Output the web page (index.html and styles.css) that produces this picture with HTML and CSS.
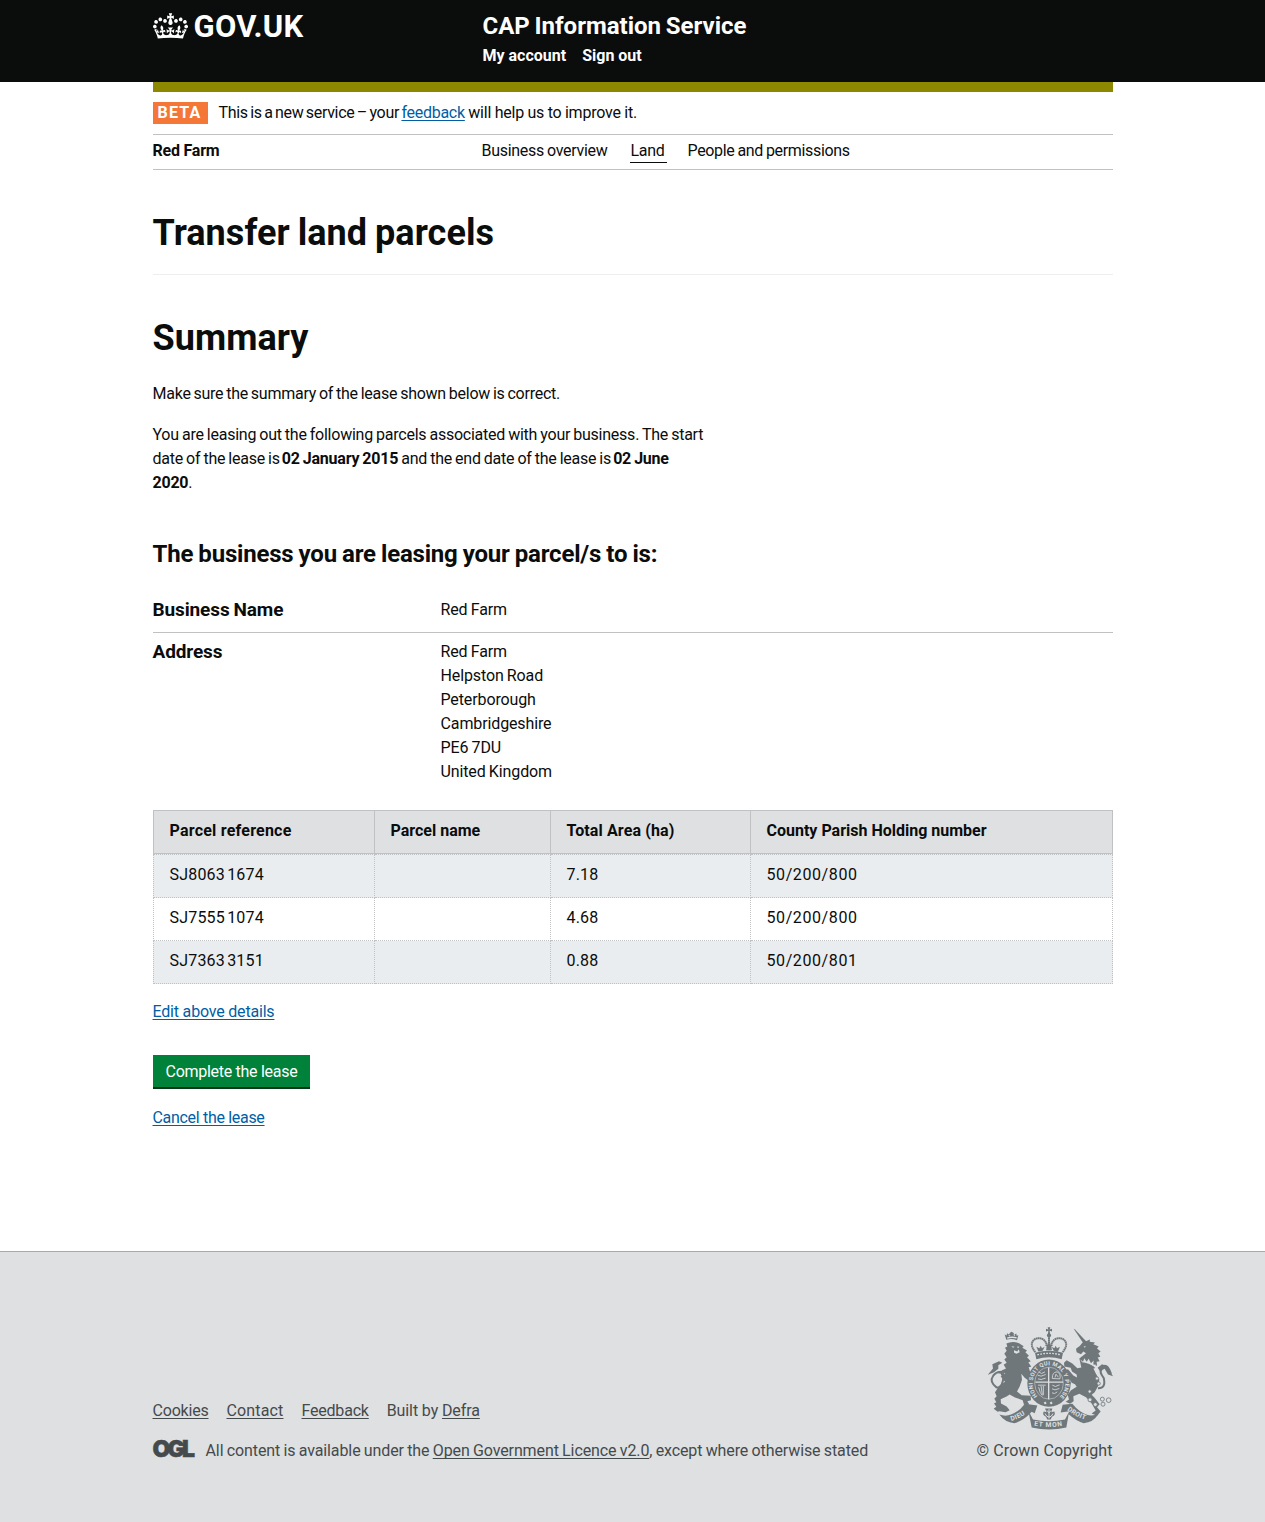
FILE: index.html
```html
<!DOCTYPE html>
<html lang="en">
<head>
<meta charset="utf-8">
<title>Transfer land parcels</title>
<link rel="stylesheet" href="styles.css">
</head>
<body>
<header class="masthead">
  <div class="wrap masthead-row">
    <a class="logo" href="#">
      <svg class="crown" viewBox="0 0 132 97" fill="#fff" aria-hidden="true"><path d="M25 30.2c3.5 1.5 7.7-.2 9.1-3.7 1.5-3.6-.2-7.8-3.9-9.2-3.6-1.4-7.6.3-9.1 3.9-1.4 3.5.3 7.5 3.9 9zM9 39.5c3.6 1.5 7.8-.2 9.2-3.7 1.5-3.6-.2-7.8-3.9-9.1-3.6-1.5-7.6.2-9.1 3.8-1.4 3.5.3 7.5 3.8 9zM4.4 57.2c3.5 1.5 7.7-.2 9.1-3.8 1.5-3.6-.2-7.7-3.9-9.1-3.5-1.5-7.6.3-9.1 3.8-1.4 3.5.3 7.6 3.9 9.1zm38.3-21.4c3.5 1.5 7.7-.2 9.1-3.8 1.5-3.6-.2-7.7-3.9-9.1-3.6-1.5-7.6.3-9.1 3.8-1.3 3.6.4 7.7 3.9 9.1zm64.4-5.6c-3.6 1.5-7.8-.2-9.1-3.7-1.5-3.6.2-7.8 3.8-9.2 3.6-1.4 7.7.3 9.2 3.9 1.3 3.5-.4 7.5-3.9 9zm15.9 9.3c-3.6 1.5-7.7-.2-9.1-3.7-1.5-3.6.2-7.8 3.7-9.1 3.6-1.5 7.7.2 9.2 3.8 1.5 3.5-.3 7.5-3.8 9zm4.7 17.7c-3.6 1.5-7.8-.2-9.2-3.8-1.5-3.6.2-7.7 3.9-9.1 3.6-1.5 7.7.3 9.2 3.8 1.3 3.5-.4 7.6-3.9 9.1zM89.3 35.8c-3.6 1.5-7.8-.2-9.2-3.8-1.4-3.6.2-7.7 3.9-9.1 3.6-1.5 7.7.3 9.2 3.8 1.4 3.6-.3 7.7-3.9 9.1zM69.7 17.7l8.9 4.7V9.3l-8.9 2.8c-.2-.3-.5-.6-.9-.9L72.4 0H59.6l3.5 11.2c-.3.3-.6.5-.9.9l-8.8-2.8v13.1l8.8-4.7c.3.3.6.7.9.9l-5 15.4v.1c-.2.8-.4 1.6-.4 2.4 0 4.1 3.1 7.5 7 8.1h.2c.3 0 .7.1 1 .1.4 0 .7 0 1-.1h.2c4-.6 7.1-4.1 7.1-8.1 0-.8-.1-1.7-.4-2.4V34l-5.1-15.4c.4-.2.7-.6 1-.9zM66 92.8c16.9 0 32.8 1.1 47.1 3.2 4-16.9 8.9-26.7 14-33.5l-9.6-3.4c1 4.9 1.1 7.2 0 10.2-1.5-1.4-3-4.3-4.2-8.7L108.6 76c2.8-2 5-3.2 7.5-3.3-4.4 9.4-10 11.9-13.6 11.2-4.3-.8-6.3-4.6-5.6-7.9 1-4.7 5.7-5.9 8-.5 4.3-8.7-3-11.4-7.6-8.8 7.1-7.2 7.9-13.5 2.1-21.1-8 6.1-8.1 12.3-4.5 20.8-4.7-5.4-12.1-2.5-9.5 6.2 3.4-5.2 7.9-2 7.2 3.1-.6 4.3-6.4 7.8-13.5 7.2-10.3-.9-10.9-8-11.2-13.8 2.5-.5 7.1 1.8 11 7.3L80.2 60c-4.1 4.4-8 5.3-12.3 5.4 1.4-4.4 8-11.6 8-11.6H55.5s6.4 7.2 7.9 11.6c-4.2-.1-8-1-12.3-5.4l1.4 16.4c3.9-5.5 8.5-7.7 10.9-7.3-.3 5.8-.9 12.8-11.1 13.8-7.2.6-12.9-2.9-13.5-7.2-.7-5 3.8-8.3 7.1-3.1 2.7-8.7-4.6-11.6-9.4-6.2 3.7-8.5 3.6-14.7-4.6-20.8-5.8 7.6-5 13.9 2.2 21.1-4.7-2.6-11.9.1-7.7 8.8 2.3-5.5 7.1-4.2 8.1.5.7 3.3-1.3 7.1-5.7 7.9-3.5.7-9-1.8-13.5-11.2 2.5.1 4.7 1.3 7.5 3.3l-4.7-15.4c-1.2 4.4-2.7 7.2-4.3 8.7-1.1-3-.9-5.3 0-10.2l-9.5 3.4c5 6.9 9.9 16.7 14 33.5 14.8-2.1 30.8-3.2 47.7-3.2z"/></svg>
      <span class="logo-text">GOV.UK</span>
    </a>
    <div class="service">
      <a class="service-name" href="#">CAP Information Service</a>
      <nav class="service-links"><a href="#">My account</a><a href="#">Sign out</a></nav>
    </div>
  </div>
</header>

<div class="wrap">
  <div class="phase">
    <strong class="tag">BETA</strong>
    <p class="phase-text"><span class="phase-lead">This is a new service – your </span><a href="#">feedback</a><span class="phase-tail"> will help us to improve it.</span></p>
  </div>
  <div class="business-bar">
    <strong class="business-name">Red Farm</strong>
    <nav class="tabs"><a href="#">Business overview</a><a class="current" href="#">Land</a><a class="tab-people" href="#">People and permissions</a></nav>
  </div>

  <main>
    <h1 class="title">Transfer land parcels</h1>
    <h2 class="section">Summary</h2>
    <div class="prose">
      <p class="intro">Make sure the summary of the lease shown below is correct.</p>
      <p class="lease">You are leasing out the following parcels associated with your business. The start<br>date of the lease is <b>02 January 2015</b> and the end date of the lease is <b>02 June</b><br><b class="year">2020</b>.</p>
    </div>
    <h3 class="subhead">The business you are leasing your parcel/s to is:</h3>
    <dl class="details">
      <div class="detail"><dt>Business Name</dt><dd>Red Farm</dd></div>
      <div class="detail"><dt>Address</dt><dd>Red Farm<br>Helpston Road<br>Peterborough<br>Cambridgeshire<br>PE6 7DU<br>United Kingdom</dd></div>
    </dl>
    <table class="parcels">
      <colgroup><col class="col-ref"><col class="col-name"><col class="col-area"><col class="col-cph"></colgroup>
      <thead><tr><th class="th-ref">Parcel reference</th><th>Parcel name</th><th class="th-area">Total Area (ha)</th><th>County Parish Holding number</th></tr></thead>
      <tbody>
        <tr><td>SJ8063 1674</td><td></td><td>7.18</td><td class="cph">50/200/800</td></tr>
        <tr><td>SJ7555 1074</td><td></td><td>4.68</td><td class="cph">50/200/800</td></tr>
        <tr><td>SJ7363 3151</td><td></td><td>0.88</td><td class="cph">50/200/801</td></tr>
      </tbody>
    </table>
    <p class="edit"><a href="#">Edit above details</a></p>
    <button class="button" type="button">Complete the lease</button>
    <p class="cancel"><a href="#">Cancel the lease</a></p>
  </main>
</div>

<footer class="footer">
  <div class="wrap footer-row">
    <div class="footer-meta">
      <ul class="footer-links"><li><a href="#">Cookies</a></li><li class="contact"><a href="#">Contact</a></li><li><a href="#">Feedback</a></li><li class="built">Built by <a href="#">Defra</a></li></ul>
      <div class="licence"><span class="ogl">OGL</span><p class="licence-text">All content is available under the <a href="#">Open Government Licence v2.0</a>, except where otherwise stated</p></div>
    </div>
    <div class="copyright">
      <svg class="crest" viewBox="39 36 375 308" aria-hidden="true">
        <defs>
          <path id="garter" d="M188 243A49 54 0 1 1 256 243"/>
          <path id="dieu" d="M109 317Q140 309 166 284"/>
          <path id="etmon" d="M177 331Q222 340 270 331"/>
          <path id="droit" d="M276 284Q303 307 340 317"/>
        </defs>
        <!-- lion -->
        <g class="ink">
          <path d="M94 74L89 58l6 3 1-7 6 4 3-5 5-3 5 3 3 5 6-3 1 7 5-2-4 15q-16-6-32-1z"/>
          <path d="M94 85Q112 76 132 84L146 93 142 98 156 106 151 111 162 122 156 126 167 138 160 142 169 155 161 156 166 172 173 181 167 188 177 203 174 214 160 208 163 198 149 188 139 176 141 194 134 214 126 229 140 240 167 242 168 255 157 258 163 268 147 269 143 255 120 247 104 238 96 243 77 252 78 265 95 274 104 285 92 291 73 288 68 290 56 281 64 275 57 265 64 261 58 251 65 243 60 231 74 211 90 200 77 184 91 176 80 166 93 160 86 149 95 143 88 133 95 126 88 116 95 107 90 98 97 94z"/>
          <path class="tail" d="M66 218Q41 200 55 181Q76 160 83 182"/>
          <path class="tail" d="M66 218Q84 218 86 178Q84 164 70 173"/>
          <path d="M38 179L54 160 52 147 72 138 82 143 70 150 70 161 57 171z"/>
        </g>
        <g class="hole">
          <path d="M96 67q14-5 29-1v4q-14-4-28 1zM109 93l10 2-5 3zM126 94l7 1-4 4zM117 105l10 4 4-7 3 9-10 5-7-4zM99 59l5 5 2-3zM115 57l3 6 3-4z"/>
        </g>
        <!-- unicorn -->
        <g class="ink">
          <path d="M296 41L300 43 334 79 326 86z"/>
          <path d="M322 83L345 73 344 80 360 82 355 87 371 94 366 100 377 109 370 114 376 125 368 127 374 138 365 140 366 152 358 150 355 159 362 174 373 193 370 212 359 231 350 239 360 249 374 267 366 276 377 289 366 302 350 295 362 286 350 265 333 246 313 236 295 243 296 258 285 266 272 260 282 253 278 239 288 225 305 215 300 207 290 203 276 178 271 187 275 200 283 195 288 204 278 209 264 189 262 167 279 162 295 181 306 187 305 178 291 169 287 158 268 154 267 143 275 135 292 145 307 159 319 157 313 130 333 114 325 109 318 117 305 111 303 101 315 92z"/>
          <path class="tail" d="M369 219Q394 220 386 188Q372 170 379 159Q394 138 408 176"/>
          <path d="M377 171L368 158 381 147 398 154 405 168 414 183 399 178 389 161 383 164z"/>
        </g>
        <path class="hole" d="M326 93l7 1-4 4zM316 133l8 7 4-11 7 11 6-9 7 13 8-8-1 12 8 1-4 7q-18-14-38-15z"/>
        <path class="ink" d="M320 144q22 1 40 13l-3 4q-18-12-37-13z"/>
        <g class="chain">
          <circle cx="366" cy="190" r="5"/><circle cx="371" cy="205" r="5"/><circle cx="344" cy="229" r="5"/><circle cx="345" cy="254" r="6"/><circle cx="361" cy="268" r="6"/><circle cx="382" cy="252" r="6"/><circle cx="384" cy="267" r="6"/><circle cx="401" cy="255" r="7"/>
        </g>
        <!-- royal crown -->
        <g class="arch">
          <path d="M181 111Q160 84 181 71Q213 61 219 104M263 111Q284 84 263 71Q231 61 225 104"/>
          <path d="M222 62V104"/>
        </g>
        <path class="ink" d="M218 36h8l-2 7 7-2v8l-7-2 1 8q7 6 0 11h-6q-7-5 0-11l1-8-7 2v-8l7 2zM180 113Q222 101 264 113L260 132Q222 121 184 132zM190 109l-6-14 9 4 4-7 4 7 8-4-6 12zM236 107l-6-12 8 4 4-7 4 7 9-4-6 14zM213 105l3-11-7-4 10-1 3-8 3 8 10 1-7 4 3 11z"/>
        <path class="band" d="M187 119Q222 110 257 119"/>
        <!-- garter and shield -->
        <ellipse class="disc" cx="222" cy="204" rx="65" ry="71"/>
        <ellipse class="ring" cx="222" cy="204" rx="43" ry="48"/>
        <path class="cross" d="M221 157V252M181 201H264"/>
        <g class="quarter">
          <path d="M191 170l9 5 10-5M188 180l10 3 14-5M189 191l9 2 14-4M232 190q-1-19 14-20q12 4 9 21zM240 187l3-10 7 9M189 210h23M191 216q4 20 11 25M198 212l4 27M205 212v28M232 210l9 4 13-5M231 221l9 3 13-4M231 233l8 2 8-5"/>
        </g>
        <text class="motto"><textPath href="#garter" textLength="250">HONI SOIT QUI MAL Y PENSE</textPath></text>
        <path class="hole" d="M206 263l5-4 4 5-5 4zM224 263l5-4 4 5-5 4z"/>
        <!-- ribbon -->
        <path class="ink" d="M73 298Q92 305 108 298Q132 290 150 266L187 271 179 294 170 290Q146 317 118 324Q90 322 73 298zM160 286L174 313Q222 324 270 313L283 288 257 292 263 269 292 266Q312 291 336 299Q352 304 371 296Q354 323 326 324Q302 316 281 297L274 337Q222 349 170 337z"/>
        <path class="ink" d="M210 280h22l-3 11 9-2q5 11-7 16l-4 8h-10l-4-8q-12-5-7-16l9 2z"/>
        <path class="fleur" d="M222 282v28M210 295q4 10 12 11q8-1 12-11M216 286l6 7 6-7"/>
        <text class="scroll"><textPath href="#dieu">DIEU</textPath></text>
        <text class="scroll"><textPath href="#etmon" textLength="86">ET MON</textPath></text>
        <text class="scroll"><textPath href="#droit">DROIT</textPath></text>
      </svg>
      <span>© Crown Copyright</span>
    </div>
  </div>
</footer>
</body>
</html>
```
FILE: styles.css
```css
* { box-sizing: border-box; }
body { margin: 0; background: #fff; color: #0b0c0c; font: 16px/24px Roboto, "Noto Sans", sans-serif; }
h1, h2, h3, p, dl, dd, ul { margin: 0; padding: 0; }
a { color: #005ea5; text-underline-offset: 2px; text-decoration-thickness: 1px; text-decoration-skip-ink: none; }
.wrap { width: 960px; margin: 0 auto; }

/* Masthead */
.masthead { background: #0b0c0c; height: 82px; }
.masthead a { color: #fff; text-decoration: none; font-weight: 700; }
.masthead-row { display: flex; }
.logo { display: flex; width: 330px; padding-top: 13px; }
.crown { width: 35px; height: 26px; }
.logo-text { font-size: 31px; line-height: 28px; margin-left: 6px; letter-spacing: .3px; }
.service { padding-top: 11px; }
.service-name { display: inline-block; font-size: 24px; line-height: 30px; word-spacing: -1.2px; }
.service-links { display: flex; gap: 16px; margin-top: 3px; }

/* Phase banner and business bar */
.phase { display: flex; align-items: center; height: 53px; border-top: 10px solid #8c8800; border-bottom: 1px solid #bfc1c3; }
.phase-text { letter-spacing: -.27px; }
.phase-lead { letter-spacing: -.32px; word-spacing: -1.2px; }
.phase-tail { letter-spacing: -.2px; word-spacing: -.3px; }
.tag { width: 55px; height: 22px; margin-right: 11px; padding-left: 5px; background: #f47738; color: #fff; line-height: 22px; letter-spacing: 1.2px; }
.business-bar { display: flex; height: 35px; padding-top: 4px; border-bottom: 1px solid #bfc1c3; }
.business-name { width: 329px; letter-spacing: -.21px; }
.tabs { display: flex; align-items: flex-start; letter-spacing: -.29px; word-spacing: -.7px; }
.tabs a { color: #0b0c0c; text-decoration: none; }
.tabs .current { width: 37px; height: 24px; margin: 0 20px 0 23px; border-bottom: 1px solid #0b0c0c; }
.tabs .tab-people { letter-spacing: -.33px; }

/* Headings and copy */
.title, .section { font-size: 36px; line-height: 40px; margin-top: 43px; letter-spacing: .05px; word-spacing: -1px; }
.title { padding-bottom: 21px; border-bottom: 1px solid #eee; }
.intro { margin-top: 24px; letter-spacing: -.25px; word-spacing: -.84px; }
.lease { margin-top: 17px; letter-spacing: -.24px; word-spacing: -.62px; }
.lease b { margin-left: -1px; }
.lease .year { margin-left: 0; }
.subhead { margin-top: 44px; font-size: 24px; line-height: 30px; letter-spacing: -.2px; word-spacing: -.6px; }

/* Business details */
.details { margin-top: 21px; }
.detail { display: flex; padding: 8px 0 10px; letter-spacing: -.12px; word-spacing: -.6px; }
.detail + .detail { padding: 7px 0 0; border-top: 1px solid #bfc1c3; }
.detail dt { width: 288px; font-size: 19px; font-weight: 700; }

/* Parcel table */
.parcels { width: 960px; margin-top: 26px; border-collapse: separate; border-spacing: 0; table-layout: fixed; }
.col-ref { width: 222px; }
.col-name { width: 176px; }
.col-area { width: 200px; }
.col-cph { width: 362px; }
.parcels th, .parcels td { height: 43px; padding: 8px 15px 10px 16px; text-align: left; }
.parcels th { background: #dee0e2; border: 1px solid #bfc1c3; border-left-width: 0; }
.parcels td { border: 1px dotted #bfc1c3; border-width: 0 1px 1px 0; letter-spacing: .2px; word-spacing: -2px; }
.parcels th:first-child, .parcels td:first-child { border-left-width: 1px; }
.parcels tbody tr:first-child td { border-top-width: 1px; }
.parcels tbody tr:nth-child(odd) { background: #e9edef; }
.parcels .th-ref { letter-spacing: .22px; }
.parcels .th-area { letter-spacing: .12px; }
.parcels .cph { letter-spacing: .59px; }

/* Actions */
.edit { margin-top: 16px; letter-spacing: -.19px; }
.button { display: block; width: 157px; height: 34px; margin-top: 31px; padding: 5px 0 3px 13px; border: 0; border-bottom: 2px solid #003618; background: #00823b; color: #fff; font: inherit; text-align: left; letter-spacing: -.28px; }
.cancel { margin-top: 17px; letter-spacing: -.31px; }

/* Footer */
.footer { height: 271px; margin-top: 121px; padding-top: 75px; border-top: 1px solid #a1acb2; background: #dee0e2; color: #454a4c; }
.footer a { color: #454a4c; }
.footer-row { display: flex; justify-content: space-between; align-items: flex-end; }
.footer-links { display: flex; gap: 18px; margin-bottom: 16px; list-style: none; letter-spacing: -.2px; }
.contact { letter-spacing: .15px; }
.built { letter-spacing: -.11px; }
.licence { display: flex; }
.ogl { width: 53px; font: 900 23px/20px Inter, sans-serif; letter-spacing: -2.8px; -webkit-text-stroke: .5px #454a4c; }
.licence-text { letter-spacing: -.1px; word-spacing: -.58px; }
.copyright { display: flex; flex-direction: column; align-items: flex-end; letter-spacing: .08px; }
.crest { width: 125px; height: 103px; margin-bottom: 9px; }

/* Crest artwork */
.ink { fill: #6f777b; }
.hole { fill: #dee0e2; }
.tail { fill: none; stroke: #6f777b; stroke-width: 6; }
.chain { fill: #dee0e2; stroke: #6f777b; stroke-width: 2.5; }
.arch { fill: none; stroke: #6f777b; stroke-width: 6; stroke-dasharray: 5 1; }
.band { fill: none; stroke: #dee0e2; stroke-width: 4; stroke-dasharray: 5 4; }
.disc { fill: #6f777b; }
.ring { fill: none; stroke: #c3c7c9; stroke-width: 2; }
.cross { stroke: #dee0e2; stroke-width: 4; }
.quarter { fill: none; stroke: #c9cccf; stroke-width: 3; }
.fleur { fill: none; stroke: #dee0e2; stroke-width: 3; }
.motto, .scroll { fill: #dee0e2; font: 700 17px Roboto, sans-serif; letter-spacing: 0; }
.scroll { font-size: 20px; letter-spacing: 1px; }
```
